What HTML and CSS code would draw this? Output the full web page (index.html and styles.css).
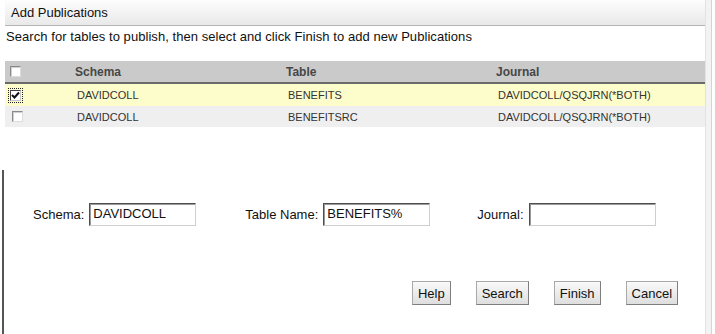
FILE: index.html
```html
<!DOCTYPE html>
<html lang="en">

<head>
    <meta charset="UTF-8">
    <title>Add Publications</title>
    <link rel="stylesheet" href="styles.css">
</head>

<body>
    <div class="wrap">
        <div class="main">
            <div class="titlebar">Add Publications</div>
            <div class="intro">Search for tables to publish, then select and click Finish to add new Publications</div>

            <div class="grid">
                <div class="row head">
                    <div class="cell check"><span class="box"></span></div>
                    <div class="cell">Schema</div>
                    <div class="cell">Table</div>
                    <div class="cell">Journal</div>
                </div>
                <div class="row selected">
                    <div class="cell check"><span class="focus"><span class="box checked">
                        <svg width="9" height="9" viewBox="0 0 9 9"><path d="M1 4 L3.5 6.5 L8 1.5" fill="none" stroke="#111" stroke-width="2"/></svg>
                    </span></span></div>
                    <div class="cell">DAVIDCOLL</div>
                    <div class="cell">BENEFITS</div>
                    <div class="cell">DAVIDCOLL/QSQJRN(*BOTH)</div>
                </div>
                <div class="row alt">
                    <div class="cell check"><span class="box"></span></div>
                    <div class="cell">DAVIDCOLL</div>
                    <div class="cell">BENEFITSRC</div>
                    <div class="cell">DAVIDCOLL/QSQJRN(*BOTH)</div>
                </div>
            </div>

            <div class="panel">
                <div class="form">
                    <label class="field">Schema: <span class="input w1">DAVIDCOLL</span></label>
                    <label class="field">Table Name: <span class="input w1">BENEFITS%</span></label>
                    <label class="field journal">Journal: <span class="input w2"></span></label>
                </div>
                <div class="buttons">
                    <button>Help</button>
                    <button>Search</button>
                    <button>Finish</button>
                    <button>Cancel</button>
                </div>
            </div>
        </div>
        <div class="side"></div>
    </div>
</body>

</html>
```

FILE: styles.css
```css
body {
    margin: 0;
    font-family: "Liberation Sans", Arial, sans-serif;
    font-size: 13px;
    color: #111111;
    background-color: #ffffff;
    height: 334px;
    overflow: hidden;
}

.wrap {
    display: flex;
    height: 334px;
}

.main {
    width: 706px;
    display: flex;
    flex-direction: column;
}

.side {
    width: 9px;
    background-color: #f3f3f3;
    border-left: 1px solid #e2e2e2;
    box-shadow: inset -3px 0 0 #ffffff, inset -4px 0 0 #d4d4d4;
}

.titlebar {
    margin-left: 5px;
    height: 25px;
    line-height: 25px;
    padding-left: 6px;
    background: linear-gradient(#fdfdfd, #e9e9e9);
    border-bottom: 1px solid #b4b4b4;
}

.intro {
    padding-left: 6px;
    height: 22px;
    line-height: 22px;
    letter-spacing: 0.06px;
}

.grid {
    margin-top: 13px;
    margin-left: 5px;
}

.row {
    display: grid;
    grid-template-columns: 70px 211px 210px 1fr;
    align-items: center;
    height: 22px;
    font-size: 11px;
    color: #333333;
}

.row .cell {
    padding-left: 2px;
}

.row .check {
    padding-left: 7px;
    display: flex;
    align-items: center;
}

.head {
    height: 21px;
    background-color: #cacaca;
    border-bottom: 2px solid #6a6a6a;
    font-size: 12px;
    font-weight: bold;
    color: #474747;
}

.head .cell {
    padding-left: 0;
}

.head .check {
    padding-left: 5px;
}

.selected {
    background-color: #fdfdcb;
}

.alt {
    height: 21px;
    background-color: #efefef;
}

.box {
    display: inline-flex;
    align-items: center;
    justify-content: center;
    width: 9px;
    height: 9px;
    background-color: #ffffff;
    border: 1px solid;
    border-color: #8a8a8a #dcdcdc #dcdcdc #8a8a8a;
    box-shadow: inset 1px 1px 0 #d0d0d0;
}

.box.checked {
    border-color: #404040 #c8c8c8 #c8c8c8 #404040;
    box-shadow: none;
}

.focus {
    display: inline-flex;
    padding: 1px;
    margin-left: -3px;
    outline: 1px dotted #222222;
}

.panel {
    margin-top: 43px;
    margin-left: 2px;
    border-left: 2px solid #555555;
    flex: 1;
}

.form {
    display: flex;
    align-items: center;
    gap: 49px;
    padding-top: 33px;
    padding-left: 29px;
}

.field {
    display: flex;
    align-items: center;
    gap: 5px;
}

.journal {
    margin-left: -2px;
}

.input {
    box-sizing: border-box;
    height: 23px;
    line-height: 20px;
    padding-left: 3px;
    border: 1px solid;
    border-color: #4e4e4e #cfcfcf #cfcfcf #4e4e4e;
    box-shadow: inset 1px 1px 0 #9a9a9a;
    font-size: 13px;
}

.w1 {
    width: 107px;
}

.w2 {
    width: 127px;
}

.buttons {
    display: flex;
    justify-content: flex-end;
    gap: 25px;
    padding-right: 27px;
    margin-top: 55px;
}

button {
    height: 24px;
    padding: 0 5px;
    font-family: "Liberation Sans", Arial, sans-serif;
    font-size: 13px;
    color: #111111;
    background: linear-gradient(#fafafa, #dedede);
    border: 1px solid #a8a8a8;
    border-right-color: #7e7e7e;
    border-bottom-color: #7e7e7e;
    border-radius: 0;
}
```
